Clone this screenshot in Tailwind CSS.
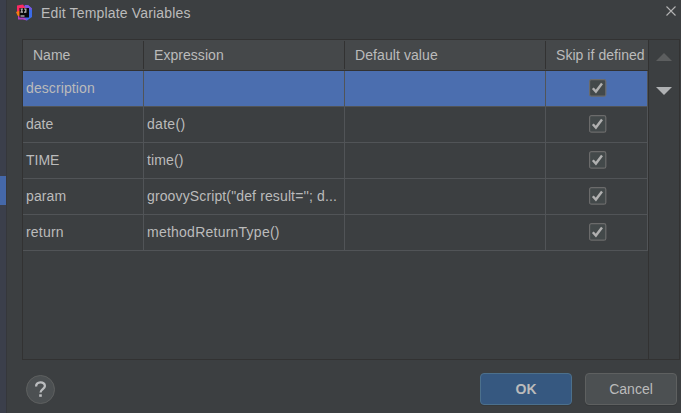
<!DOCTYPE html>
<html lang="en">
<head>
<meta charset="utf-8">
<title>Edit Template Variables</title>
<script src="https://cdn.jsdelivr.net/npm/@tailwindcss/browser@4"></script>
</head>
<body class="w-[681px] h-[413px] overflow-hidden flex bg-[#3c3f41] text-[#bbbbbb] text-[14px] leading-[18px] font-['Liberation_Sans',Arial,sans-serif]">
<svg class="hidden">
  <symbol id="check" viewBox="0 0 18 18">
    <rect x=".6" y=".6" width="16.2" height="16.6" rx="1.8" fill="#43494a" stroke="#6b6b6b" stroke-width="1.2"/>
    <path d="M3.8 9.2 6.9 12.6 13 4.6" fill="none" stroke="#b0b0b0" stroke-width="2.4"/>
  </symbol>
</svg>
<aside class="w-[7px] shrink-0 flex flex-col bg-[#3b3f4b] border-r border-[#35373b]">
  <div class="mt-[176px] h-[29px] w-[6px] bg-[#4568a9]"></div>
</aside>
<main class="flex-1 flex flex-col">
  <header class="h-[39px] flex items-start shrink-0">
    <svg class="ml-[9px] mt-[4px]" width="17" height="17" viewBox="0 0 17 17">
      <path d="M9 1 12 1 16 4.5 16 13 11 16.5 7 15 7 4Z" fill="#3b6be6"/>
      <path d="M9 1 12 1 16 4.5 15 6 9 5Z" fill="#7a56e0"/>
      <path d="M1 1.5 7 .5 9.5 4 4 12 1 8Z" fill="#fb2a63"/>
      <path d="M2 10 6 10 11 16.5 7 15.5 2 15.5Z" fill="#b13fc4"/>
      <path d="M0 8 4 6.5 4 12.5 1.5 11.5Z" fill="#f97a12"/>
      <rect x="3.5" y="4" width="9.5" height="9.5" fill="#080808"/>
      <path d="M4.5 5H7M5.8 5V8.2M4.5 8.2H7M8 5H10.5M9.8 5V8.1H8" fill="none" stroke="#ddd" stroke-opacity=".85" stroke-width="1.2"/>
      <path d="M4.5 12H8.5" stroke="#eee" stroke-width="1"/>
    </svg>
    <h1 class="ml-[8px] mt-[4px] font-normal tracking-[0.17px]">Edit Template Variables</h1>
    <svg class="ml-auto mt-[6px] mr-[5px]" width="10" height="10" viewBox="0 0 10 10"><path d="M.5.5 9.5 9.5M9.5.5.5 9.5" stroke="#b4b4b4" stroke-width="1.1"/></svg>
  </header>
  <section class="ml-[15px] w-[658px] h-[321px] shrink-0 border border-[#323232] flex">
    <div class="w-[625px] shrink-0">
      <div class="h-[31px] flex items-center bg-[#45484a] border-b border-[#323232]">
        <div class="w-[121px] h-[28px] pl-[10px] pt-[5px] border-r border-[#323232]">Name</div>
        <div class="w-[201px] h-[28px] pl-[10px] pt-[5px] border-r border-[#323232] tracking-[0.05px]">Expression</div>
        <div class="w-[201px] h-[28px] pl-[10px] pt-[5px] border-r border-[#323232] tracking-[0.08px]">Default value</div>
        <div class="w-[102px] h-[28px] pl-[10px] pt-[5px] whitespace-nowrap tracking-[0.05px]">Skip if defined</div>
      </div>
      <div class="grid grid-cols-[121px_201px_201px_102px] auto-rows-[36px] *:border-r *:border-b *:border-[#515457] *:pl-[3px] *:pt-[8px] *:whitespace-nowrap">
        <div class="bg-[#4b6eaf] tracking-[0.1px]">description</div><div class="bg-[#4b6eaf]"></div><div class="bg-[#4b6eaf]"></div><div class="bg-[#4b6eaf]"><svg class="ml-[40px]" width="18" height="18"><use href="#check"/></svg></div>
        <div>date</div><div class="tracking-[0.3px]">date()</div><div></div><div><svg class="ml-[40px]" width="18" height="18"><use href="#check"/></svg></div>
        <div>TIME</div><div class="tracking-[0.15px]">time()</div><div></div><div><svg class="ml-[40px]" width="18" height="18"><use href="#check"/></svg></div>
        <div class="tracking-[0.1px]">param</div><div class="tracking-[0.13px]">groovyScript("def result=''; d...</div><div></div><div><svg class="ml-[40px]" width="18" height="18"><use href="#check"/></svg></div>
        <div class="tracking-[0.2px]">return</div><div class="tracking-[0.24px]">methodReturnType()</div><div></div><div><svg class="ml-[40px]" width="18" height="18"><use href="#check"/></svg></div>
      </div>
    </div>
    <div class="flex-1 border-l border-[#323232] flex flex-col">
      <svg class="ml-[7px] mt-[13px]" width="16" height="8"><path d="M0 8 8 0 16 8Z" fill="#5c5e5f"/></svg>
      <svg class="ml-[7px] mt-[26px]" width="16" height="8"><path d="M0 0H16L8 8Z" fill="#afb1b3"/></svg>
    </div>
  </section>
  <footer class="flex items-start pt-[13px] pl-[19px]">
    <svg class="mt-[2px]" width="29" height="29" viewBox="0 0 29 29">
      <circle cx="14.5" cy="14.5" r="14" fill="#4c5052" stroke="#5e6060"/>
      <path d="M10.1 11.6C10.1 6.2 18.9 6.2 18.9 11C18.9 14 14.5 14.2 14.5 17.6" fill="none" stroke="#bbbdbf" stroke-width="2.3"/>
      <rect x="13.2" y="19.3" width="2.6" height="2.5" fill="#bbbdbf"/>
    </svg>
    <button class="ml-[425px] w-[92px] h-[32px] rounded-[4px] border border-[#4c708c] bg-[#365880] font-bold shadow-[0_1px_0_#36393b]">OK</button>
    <button class="ml-[13px] w-[92px] h-[32px] rounded-[4px] border border-[#5e6060] bg-[#4c5052] shadow-[0_1px_0_#36393b]">Cancel</button>
  </footer>
</main>
</body>
</html>
